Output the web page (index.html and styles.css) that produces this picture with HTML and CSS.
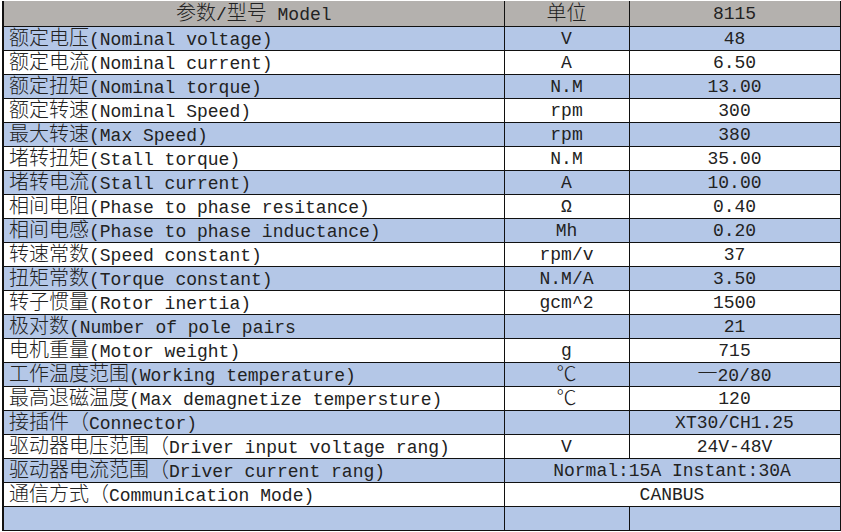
FILE: index.html
```html
<!DOCTYPE html>
<html lang="zh">
<head>
<meta charset="utf-8">
<title>8115 参数</title>
<link rel="stylesheet" href="styles.css">
</head>
<body>
<table class="spec">
  <colgroup>
    <col class="c1">
    <col class="c2">
    <col class="c3">
  </colgroup>
  <thead>
    <tr class="head">
      <th class="name-h"><span class="cjk">参数</span>/<span class="cjk">型号</span> Model</th>
      <th><span class="cjk">单位</span></th>
      <th>8115</th>
    </tr>
  </thead>
  <tbody>
    <tr class="blue"><td class="name"><span class="cjk">额定电压</span>(Nominal voltage)</td><td>V</td><td>48</td></tr>
    <tr><td class="name"><span class="cjk">额定电流</span>(Nominal current)</td><td>A</td><td>6.50</td></tr>
    <tr class="blue"><td class="name"><span class="cjk">额定扭矩</span>(Nominal torque)</td><td>N.M</td><td>13.00</td></tr>
    <tr><td class="name"><span class="cjk">额定转速</span>(Nominal Speed)</td><td>rpm</td><td>300</td></tr>
    <tr class="blue"><td class="name"><span class="cjk">最大转速</span>(Max Speed)</td><td>rpm</td><td>380</td></tr>
    <tr><td class="name"><span class="cjk">堵转扭矩</span>(Stall torque)</td><td>N.M</td><td>35.00</td></tr>
    <tr class="blue"><td class="name"><span class="cjk">堵转电流</span>(Stall current)</td><td>A</td><td>10.00</td></tr>
    <tr><td class="name"><span class="cjk">相间电阻</span>(Phase to phase resitance)</td><td>Ω</td><td>0.40</td></tr>
    <tr class="blue"><td class="name"><span class="cjk">相间电感</span>(Phase to phase inductance)</td><td>Mh</td><td>0.20</td></tr>
    <tr><td class="name"><span class="cjk">转速常数</span>(Speed constant)</td><td>rpm/v</td><td>37</td></tr>
    <tr class="blue"><td class="name"><span class="cjk">扭矩常数</span>(Torque constant)</td><td>N.M/A</td><td>3.50</td></tr>
    <tr><td class="name"><span class="cjk">转子惯量</span>(Rotor inertia)</td><td>gcm^2</td><td>1500</td></tr>
    <tr class="blue"><td class="name"><span class="cjk">极对数</span>(Number of pole pairs</td><td></td><td>21</td></tr>
    <tr><td class="name"><span class="cjk">电机重量</span>(Motor weight)</td><td>g</td><td>715</td></tr>
    <tr class="blue"><td class="name"><span class="cjk">工作温度范围</span>(Working temperature)</td><td><span class="cjk">℃</span></td><td><span class="cjk">一</span>20/80</td></tr>
    <tr><td class="name"><span class="cjk">最高退磁温度</span>(Max demagnetize tempersture)</td><td><span class="cjk">℃</span></td><td>120</td></tr>
    <tr class="blue"><td class="name"><span class="cjk">接插件（</span>Connector)</td><td></td><td>XT30/CH1.25</td></tr>
    <tr><td class="name"><span class="cjk">驱动器电压范围（</span>Driver input voltage rang)</td><td>V</td><td>24V-48V</td></tr>
    <tr class="blue"><td class="name"><span class="cjk">驱动器电流范围（</span>Driver current rang)</td><td colspan="2">Normal:15A Instant:30A</td></tr>
    <tr><td class="name"><span class="cjk">通信方式（</span>Communication Mode)</td><td colspan="2">CANBUS</td></tr>
    <tr class="blue"><td class="name"></td><td></td><td></td></tr>
  </tbody>
</table>
</body>
</html>
```

FILE: styles.css
```css
html, body {
  margin: 0;
  padding: 0;
  background: #ffffff;
}

body {
  padding: 1px 0 0 2px;
}

.spec {
  border-collapse: collapse;
  table-layout: fixed;
  width: 837px;
  font-family: "Liberation Mono", "Noto Sans CJK SC", monospace;
  font-size: 18px;
  line-height: 20px;
  color: #222222;
}

.c1 { width: 501px; }
.c2 { width: 125px; }
.c3 { width: 211px; }

.spec th,
.spec td {
  border: 1px solid #111;
  padding: 2px 4px 0;
  height: 23px;
  box-sizing: border-box;
  text-align: center;
  vertical-align: top;
  white-space: nowrap;
  font-weight: normal;
}

.spec tr {
  height: 24px;
}

.spec tr.head {
  height: 25px;
  background: #b4b1ae;
}

.spec tr.head th {
  border-top: none;
  height: 25px;
  padding-top: 3px;
}

.spec tr.blue {
  background: #b4c7e7;
}

.spec td.name {
  text-align: left;
  padding-left: 5px;
  border-left: 2px solid #111;
}

.spec th.name-h {
  border-left: 2px solid #111;
}

.cjk {
  font-family: "Noto Sans CJK SC", sans-serif;
  font-size: 20px;
  font-weight: 300;
  line-height: 16px;
}
```
